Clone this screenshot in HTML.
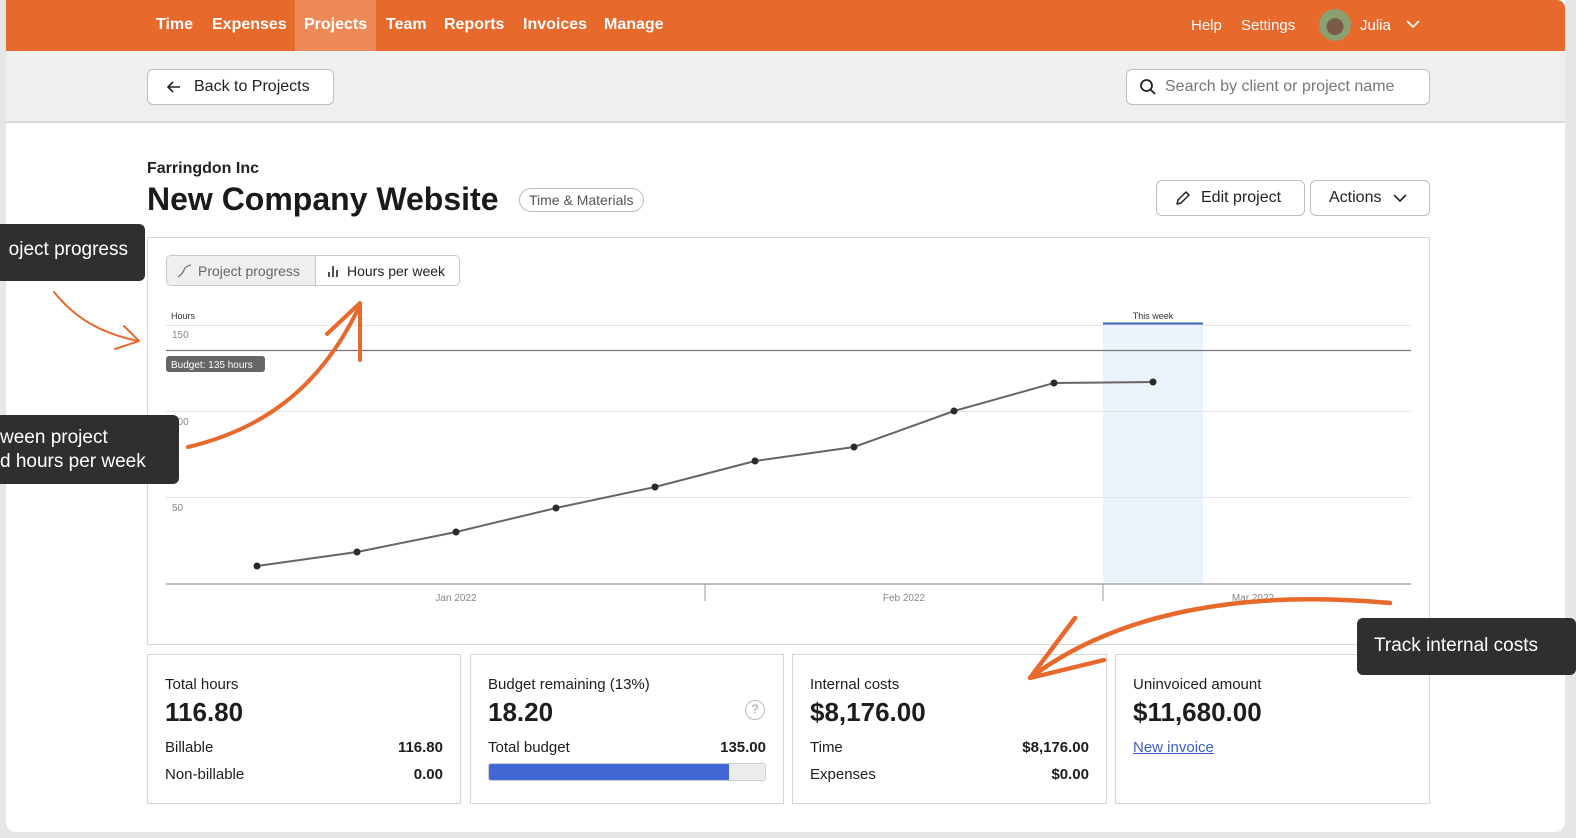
<!DOCTYPE html>
<html><head><meta charset="utf-8"><style>
*{box-sizing:border-box;margin:0;padding:0}
body{width:1576px;height:838px;background:#e6e6e6;font-family:"Liberation Sans",sans-serif;color:#1d1d1d;position:relative;overflow:hidden}
.a{position:absolute}
#page{left:6px;top:0;width:1559px;height:832px;background:#fff;border-radius:0 0 10px 10px;overflow:hidden}
#nav{left:6px;top:0;width:1559px;height:51px;background:#e8692c;border-radius:0 8px 0 0}
.nl{position:absolute;top:16px;color:#fff;font-size:16px;font-weight:bold}
.nr{position:absolute;top:17px;color:#fff;font-size:15px}
#sub{left:6px;top:51px;width:1559px;height:72px;background:#efefef;border-bottom:2px solid #dadada}
.btn{position:absolute;background:#fff;border:1px solid #bfbfbf;border-radius:6px;font-size:16px;color:#222;display:flex;align-items:center}
.card{position:absolute;top:654px;height:150px;border:1px solid #d6d6d6;background:#fff;padding:0 17px}
.card .t{position:absolute;left:17px;top:21px;font-size:15px}
.card .v{position:absolute;left:17px;top:42px;font-size:26px;font-weight:bold}
.row{position:absolute;left:17px;right:17px;font-size:15px;display:flex;justify-content:space-between}
.row b{font-weight:bold}
.tip{position:absolute;background:#2f2f2f;color:#fff;font-size:19px;border-radius:6px}
</style></head><body>
<div id="page" class="a"></div>
<div id="nav" class="a">
<div class="a" style="left:289px;top:0;width:81px;height:51px;background:#ed8a58"></div>
<span class="nl" style="left:150px">Time</span>
<span class="nl" style="left:206px">Expenses</span>
<span class="nl" style="left:298px">Projects</span>
<span class="nl" style="left:380px">Team</span>
<span class="nl" style="left:438px">Reports</span>
<span class="nl" style="left:517px">Invoices</span>
<span class="nl" style="left:598px">Manage</span>
<span class="nr" style="left:1185px">Help</span>
<span class="nr" style="left:1235px">Settings</span>
<div class="a" style="left:1313px;top:9px;width:32px;height:32px;border-radius:50%;background:radial-gradient(circle at 50% 55%,#7a5a48 0 35%,#8aa070 36% 100%)"></div>
<span class="nr" style="left:1354px">Julia</span>
<svg class="a" style="left:1400px;top:19px" width="14" height="10"><path d="M1 2l6 6 6-6" stroke="#fff" stroke-width="1.6" fill="none"/></svg>
</div>
<div id="sub" class="a"></div>
<div class="btn" style="left:147px;top:69px;width:187px;height:36px;padding-left:18px"><svg width="16" height="14" style="margin-right:12px"><path d="M14 7H2M7 2L2 7l5 5" stroke="#222" stroke-width="1.6" fill="none"/></svg>Back to Projects</div>
<div class="btn" style="left:1126px;top:69px;width:304px;height:36px;padding-left:12px;color:#777;font-size:16px"><svg width="18" height="18" style="margin-right:8px"><circle cx="7.5" cy="7.5" r="5.5" stroke="#222" stroke-width="1.8" fill="none"/><path d="M11.5 11.5l4.5 4.5" stroke="#222" stroke-width="1.8"/></svg>Search by client or project name</div>

<div class="a" style="left:147px;top:160px;font-size:16px;font-weight:bold;color:#222">Farringdon Inc</div>
<div class="a" style="left:147px;top:181px;font-size:32px;font-weight:bold;color:#1a1a1a">New Company Website</div>
<div class="a" style="left:519px;top:188px;height:24px;padding:0 9px;border:1px solid #bbb;border-radius:12px;font-size:14px;color:#555;line-height:22px">Time &amp; Materials</div>
<div class="btn" style="left:1156px;top:180px;width:149px;height:36px;padding-left:17px"><svg width="18" height="18" style="margin-right:9px"><path d="M3 15l1-4 8-8 3 3-8 8z" stroke="#222" stroke-width="1.5" fill="none" stroke-linejoin="round"/></svg>Edit project</div>
<div class="btn" style="left:1310px;top:180px;width:120px;height:36px;padding-left:18px">Actions<svg width="14" height="10" style="margin-left:12px"><path d="M1 2l6 6 6-6" stroke="#222" stroke-width="1.6" fill="none"/></svg></div>

<div class="a" style="left:147px;top:237px;width:1283px;height:408px;border:1px solid #d6d6d6"></div>
<div class="a" style="left:166px;top:255px;width:294px;height:31px;border:1px solid #c8c8c8;border-radius:5px;overflow:hidden;font-size:14px;display:flex">
<div style="width:149px;background:#efefef;color:#666;display:flex;align-items:center;padding-left:10px;border-right:1px solid #c8c8c8"><svg width="16" height="14" style="margin-right:5px"><path d="M1 13c3-2 5-4 6-7s3-4 7-5" stroke="#777" stroke-width="1.3" fill="none"/></svg>Project progress</div>
<div style="flex:1;display:flex;align-items:center;padding-left:11px;color:#222"><svg width="14" height="14" style="margin-right:6px"><path d="M2 13V8M6 13V2M10 13V6" stroke="#222" stroke-width="1.6"/></svg>Hours per week</div>
</div>

<svg class="a" style="left:0;top:0" width="1576" height="838">
<rect x="1103" y="323" width="100" height="261" fill="#eaf2fc"/>
<line x1="1103" y1="323.5" x2="1203" y2="323.5" stroke="#3a63b8" stroke-width="2"/>
<text x="1153" y="319" font-size="9" fill="#333" text-anchor="middle" font-family="Liberation Sans">This week</text>
<text x="171" y="319" font-size="9" fill="#333" font-family="Liberation Sans">Hours</text>
<g stroke="#e4e4e4" stroke-width="1"><line x1="166" y1="325.5" x2="1411" y2="325.5"/><line x1="166" y1="411.5" x2="1411" y2="411.5"/><line x1="166" y1="497.5" x2="1411" y2="497.5"/></g>
<line x1="166" y1="350.5" x2="1411" y2="350.5" stroke="#777" stroke-width="1.3"/>
<line x1="166" y1="584" x2="1411" y2="584" stroke="#999" stroke-width="1.3"/>
<line x1="705" y1="584" x2="705" y2="601" stroke="#999"/><line x1="1103" y1="584" x2="1103" y2="601" stroke="#999"/>
<g font-size="10" fill="#888" font-family="Liberation Sans"><text x="172" y="338">150</text><text x="172" y="425">100</text><text x="172" y="511">50</text>
<text x="456" y="601" text-anchor="middle">Jan 2022</text><text x="904" y="601" text-anchor="middle">Feb 2022</text><text x="1253" y="601" text-anchor="middle">Mar 2022</text></g>
<rect x="166" y="356" width="99" height="16" rx="3" fill="#666"/>
<text x="171" y="368" font-size="10" fill="#fff" font-family="Liberation Sans">Budget: 135 hours</text>
<polyline points="257,566 357,552 456,532 556,508 655,487 755,461 854,447 954,411 1054,383 1153,382" fill="none" stroke="#666" stroke-width="2"/>
<g fill="#2a2a2a"><circle cx="257" cy="566" r="3.5"/><circle cx="357" cy="552" r="3.5"/><circle cx="456" cy="532" r="3.5"/><circle cx="556" cy="508" r="3.5"/><circle cx="655" cy="487" r="3.5"/><circle cx="755" cy="461" r="3.5"/><circle cx="854" cy="447" r="3.5"/><circle cx="954" cy="411" r="3.5"/><circle cx="1054" cy="383" r="3.5"/><circle cx="1153" cy="382" r="3.5"/></g>
</svg>

<div class="card" style="left:147px;width:314px"><div class="t">Total hours</div><div class="v">116.80</div>
<div class="row" style="top:84px"><span>Billable</span><b>116.80</b></div><div class="row" style="top:111px"><span>Non-billable</span><b>0.00</b></div></div>
<div class="card" style="left:470px;width:314px"><div class="t">Budget remaining (13%)</div><div class="v">18.20</div>
<div class="a" style="right:18px;top:45px;width:20px;height:20px;border:1.5px solid #bbb;border-radius:50%;font-size:12px;color:#999;text-align:center;line-height:17px">?</div>
<div class="row" style="top:84px"><span>Total budget</span><b>135.00</b></div>
<div class="a" style="left:17px;top:108px;width:278px;height:18px;background:#ececec;border:1px solid #ccc;border-radius:3px;overflow:hidden"><div style="width:240px;height:100%;background:#4168d4"></div></div></div>
<div class="card" style="left:792px;width:315px"><div class="t">Internal costs</div><div class="v">$8,176.00</div>
<div class="row" style="top:84px"><span>Time</span><b>$8,176.00</b></div><div class="row" style="top:111px"><span>Expenses</span><b>$0.00</b></div></div>
<div class="card" style="left:1115px;width:315px"><div class="t">Uninvoiced amount</div><div class="v">$11,680.00</div>
<div class="a" style="left:17px;top:84px;font-size:15px;color:#3a5fc8;text-decoration:underline">New invoice</div></div>

<div class="tip" style="left:-5px;top:224px;width:150px;height:57px;padding:15px 0 0 0;text-align:right;padding-right:17px">oject progress</div>
<div class="tip" style="left:-5px;top:415px;width:184px;height:69px;padding:11px 0 0 5px;line-height:24px">ween project<br>d hours per week</div>
<div class="tip" style="left:1357px;top:618px;width:219px;height:57px;padding:17px 0 0 17px">Track internal costs</div>

<svg class="a" style="left:0;top:0" width="1576" height="838" fill="none" stroke="#e8692c" stroke-linecap="round" stroke-linejoin="round">
<path d="M54 292C75 318 100 333 138 341M124 326L139 341L115 349" stroke-width="2"/>
<path d="M188 447C260 430 320 390 360 305M327 334L360 303L360 360" stroke-width="4"/>
<path d="M1390 603C1250 590 1120 610 1030 678M1075 618L1030 678L1104 660" stroke-width="4.5"/>
</svg>
</body></html>
